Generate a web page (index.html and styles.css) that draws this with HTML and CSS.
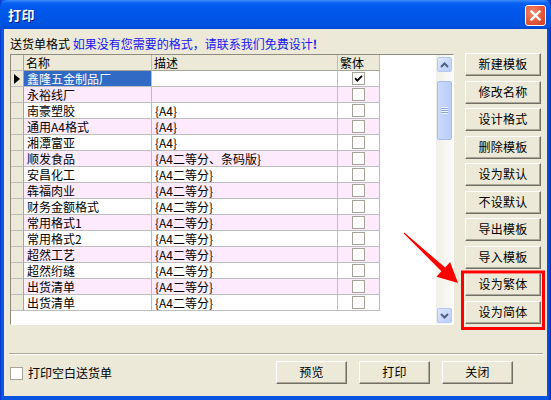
FILE: index.html
```html
<!DOCTYPE html>
<html lang="zh-CN">
<head>
<meta charset="utf-8">
<title>打印</title>
<link rel="stylesheet" href="styles.css">
</head>
<body>
<div class="window">
  <div class="titlebar">
    <span class="title">打印</span>
    <div class="close">
      <svg width="11" height="11" viewBox="0 0 11 11"><path d="M1.5 1.5 L9.5 9.5 M9.5 1.5 L1.5 9.5" stroke="#fff" stroke-width="2.4" stroke-linecap="square"/></svg>
    </div>
  </div>
  <div class="client">
    <div class="hint">送货单格式 <span class="blue">如果没有您需要的格式，请联系我们免费设计<b>!</b></span></div>
    <div class="main">
      <div class="grid">
        <div class="table">
          <div class="row head"><div class="ind"></div><div class="c">名称</div><div class="c">描述</div><div class="c">繁体</div></div>
          <div class="row"><div class="ind cur"><span class="tri"></span></div><div class="c sel">鑫隆五金制品厂</div><div class="c"></div><div class="c chk"><span class="box on"><svg width="9" height="9" viewBox="0 0 9 9"><path d="M1 4.2 L3.3 6.6 L8 1.8" stroke="#000" stroke-width="1.8" fill="none"/></svg></span></div></div>
          <div class="row pink"><div class="ind"></div><div class="c">永裕线厂</div><div class="c"></div><div class="c chk"><span class="box"></span></div></div>
          <div class="row"><div class="ind"></div><div class="c">南豪塑胶</div><div class="c">{A4}</div><div class="c chk"><span class="box"></span></div></div>
          <div class="row pink"><div class="ind"></div><div class="c">通用A4格式</div><div class="c">{A4}</div><div class="c chk"><span class="box"></span></div></div>
          <div class="row"><div class="ind"></div><div class="c">湘潭富亚</div><div class="c">{A4}</div><div class="c chk"><span class="box"></span></div></div>
          <div class="row pink"><div class="ind"></div><div class="c">顺发食品</div><div class="c">{A4二等分、条码版}</div><div class="c chk"><span class="box"></span></div></div>
          <div class="row"><div class="ind"></div><div class="c">安昌化工</div><div class="c">{A4二等分}</div><div class="c chk"><span class="box"></span></div></div>
          <div class="row pink"><div class="ind"></div><div class="c">犇福肉业</div><div class="c">{A4二等分}</div><div class="c chk"><span class="box"></span></div></div>
          <div class="row"><div class="ind"></div><div class="c">财务金额格式</div><div class="c">{A4二等分}</div><div class="c chk"><span class="box"></span></div></div>
          <div class="row pink"><div class="ind"></div><div class="c">常用格式1</div><div class="c">{A4二等分}</div><div class="c chk"><span class="box"></span></div></div>
          <div class="row"><div class="ind"></div><div class="c">常用格式2</div><div class="c">{A4二等分}</div><div class="c chk"><span class="box"></span></div></div>
          <div class="row pink"><div class="ind"></div><div class="c">超然工艺</div><div class="c">{A4二等分}</div><div class="c chk"><span class="box"></span></div></div>
          <div class="row"><div class="ind"></div><div class="c">超然绗缝</div><div class="c">{A4二等分}</div><div class="c chk"><span class="box"></span></div></div>
          <div class="row pink"><div class="ind"></div><div class="c">出货清单</div><div class="c">{A4二等分}</div><div class="c chk"><span class="box"></span></div></div>
          <div class="row"><div class="ind"></div><div class="c">出货清单</div><div class="c">{A4二等分}</div><div class="c chk"><span class="box"></span></div></div>
        </div>
        <div class="vscroll">
          <div class="sbtn"><svg width="9" height="6" viewBox="0 0 9 6"><path d="M1 5 L4.5 1.5 L8 5" stroke="#4D6185" stroke-width="2" fill="none"/></svg></div>
          <div class="thumb"><span class="grip"></span></div>
          <div class="sbtn down"><svg width="9" height="6" viewBox="0 0 9 6"><path d="M1 1 L4.5 4.5 L8 1" stroke="#4D6185" stroke-width="2" fill="none"/></svg></div>
        </div>
      </div>
      <div class="side">
        <div class="btn">新建模板</div>
        <div class="btn">修改名称</div>
        <div class="btn">设计格式</div>
        <div class="btn">删除模板</div>
        <div class="btn">设为默认</div>
        <div class="btn">不设默认</div>
        <div class="btn">导出模板</div>
        <div class="btn">导入模板</div>
        <div class="btn">设为繁体</div>
        <div class="btn">设为简体</div>
      </div>
    </div>
    <div class="sep"></div>
    <div class="bottom">
      <span class="box big"></span><span class="blabel">打印空白送货单</span>
      <div class="actions">
        <div class="btn wide">预览</div>
        <div class="btn wide">打印</div>
        <div class="btn wide">关闭</div>
      </div>
    </div>
  </div>
  <svg class="annot" width="551" height="400" viewBox="0 0 551 400">
    <rect x="462.5" y="272" width="81" height="56.5" fill="none" stroke="#FF0000" stroke-width="3"/>
    <polygon fill="#FF0000" points="404.3,232.6 445.2,267.6 450.1,262.1 458,283 436.5,276.7 441.4,271.2 403.7,233.4"/>
  </svg>
</div>
</body>
</html>
```
FILE: styles.css
```css
* { box-sizing: border-box; }
html, body { margin: 0; padding: 0; }
body {
  width: 551px;
  height: 400px;
  font-family: "Noto Sans CJK SC", "Noto Sans", sans-serif;
  font-size: 12px;
  color: #000;
  background: #fff;
  overflow: hidden;
}
.window {
  position: relative;
  width: 551px;
  height: 400px;
  background: linear-gradient(90deg, #0831C8 0px, #0A5BEA 2px, #0854E0 4px, #0854E0 547px, #0A48D8 549px, #0026B0 551px);
  display: flex;
  flex-direction: column;
}
.titlebar {
  height: 29px;
  display: flex;
  align-items: center;
  justify-content: space-between;
  padding: 0 5px 0 8px;
  background: linear-gradient(180deg, #3D8CFA 0px, #0A62F2 3px, #0058EE 8px, #0055E6 18px, #0052E0 25px, #0047D2 29px);
  border-radius: 7px 7px 0 0;
}
.title {
  color: #fff;
  font-weight: bold;
  font-size: 13px;
  line-height: 16px;
  text-shadow: 1px 1px 0 #0A1D7A;
  letter-spacing: 0.5px;
}
.close {
  width: 21px;
  height: 21px;
  border: 1px solid #fff;
  border-radius: 3px;
  background: radial-gradient(circle at 35% 35%, #F08A6E 0%, #E5583A 55%, #C8401F 100%);
  display: flex;
  align-items: center;
  justify-content: center;
  margin-top: 1px;
}
.client {
  flex: 1;
  margin: 0 4px 4px 4px;
  background: #ECE9D8;
  display: flex;
  flex-direction: column;
  padding: 8px 0 0 6px;
}
.hint {
  line-height: 14px;
  height: 14px;
  white-space: nowrap;
}
.blue { color: #1616EE; }
.blue b { font-weight: bold; }
.main {
  margin-top: 2px;
  height: 272px;
  display: flex;
}
.grid {
  margin-top: 1px;
  width: 444px;
  height: 271px;
  border-style: solid;
  border-width: 1px;
  border-color: #8E8C80 #FFFFFF #FFFFFF #8E8C80;
  display: flex;
  background: #fff;
}
.table {
  flex: 1;
  background: #fff;
  display: flex;
  flex-direction: column;
}
.row {
  display: grid;
  grid-template-columns: 13px 128px 186px 42px;
  height: 16px;
  width: 369px;
  background: #fff;
}
.row.pink { background: #FDEAFD; }
.row .c, .row .ind {
  border-right: 1px solid #BDBDBD;
  border-bottom: 1px solid #BDBDBD;
  line-height: 15px;
  padding-left: 3px;
  white-space: nowrap;
  overflow: hidden;
}
.row .ind {
  background: #ECE9D8;
  padding: 0;
  display: flex;
  align-items: center;
  border-right-color: #A9A699;
}
.head .c { background: #ECE9D8; padding-left: 2px; border-bottom-color: #A9A699; }
.row .c.sel { background: #316AC5; color: #fff; }
.tri {
  margin-left: 3px;
  width: 0;
  height: 0;
  border-left: 6px solid #000;
  border-top: 5px solid transparent;
  border-bottom: 5px solid transparent;
}
.row .chk {
  padding: 0;
  display: flex;
  align-items: center;
  justify-content: center;
}
.box {
  width: 13px;
  height: 13px;
  border: 1px solid #A6A49A;
  background: #fff;
  display: inline-flex;
  align-items: center;
  justify-content: center;
}
.vscroll {
  width: 17px;
  padding: 2px 1px 1px 1px;
  background: linear-gradient(90deg, #F0EFE8, #FBFBF8);
  display: flex;
  flex-direction: column;
}
.sbtn {
  width: 15px;
  height: 15px;
  border: 1px solid #B4C8F6;
  border-radius: 2px;
  background: linear-gradient(135deg, #DDE7FE, #BBCEF8);
  display: flex;
  align-items: center;
  justify-content: center;
}
.sbtn.down { margin-top: auto; }
.thumb {
  margin-top: 9px;
  height: 59px;
  border: 1px solid #A6BDF0;
  border-radius: 2px;
  background: linear-gradient(90deg, #CBDBFE, #B9CCF9);
  display: flex;
  align-items: center;
  justify-content: center;
}
.grip {
  width: 7px;
  height: 7px;
  background: repeating-linear-gradient(180deg, #EEF4FE 0px, #EEF4FE 1px, #8CA6DD 1px, #8CA6DD 2px);
}
.side {
  margin-left: 11px;
  width: 76px;
  height: 271px;
  display: flex;
  flex-direction: column;
  justify-content: space-between;
}
.btn {
  height: 23px;
  border-style: solid;
  border-width: 1px;
  border-color: #FFFFFF #716F64 #716F64 #FFFFFF;
  box-shadow: inset -1px -1px 0 #ACA899;
  background: #ECE9D8;
  text-align: center;
  line-height: 20px;
  white-space: nowrap;
  letter-spacing: 0.3px;
}
.sep {
  margin: 28px 4px 0 -1px;
  height: 2px;
  border-top: 1px solid #ACA899;
  border-bottom: 1px solid #FFFFFF;
}
.bottom {
  margin-top: 6px;
  height: 23px;
  display: flex;
  align-items: center;
  padding-right: 34px;
}
.box.big { margin-top: 1px; }
.blabel { margin-left: 5px; line-height: 14px; }
.actions {
  margin-left: auto;
  display: flex;
  gap: 12px;
}
.btn.wide { width: 71px; }
.annot {
  position: absolute;
  left: 0;
  top: 0;
  pointer-events: none;
}
```
